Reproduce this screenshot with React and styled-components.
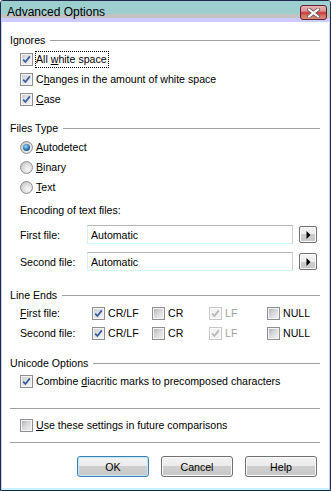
import React from "react";
import styled, { createGlobalStyle } from "styled-components";

const Global = createGlobalStyle`
  html, body { margin: 0; padding: 0; background: #fff; }
  body {
    font-family: "Liberation Sans", Arial, sans-serif;
    font-size: 10.6px;
    color: #000;
  }
`;

const Window = styled.div`
  width: 331px;
  height: 491px;
  box-sizing: border-box;
  border: 1px solid #1d2b4a;
  border-radius: 3px 3px 0 0;
  background: #fff;
  display: flex;
  flex-direction: column;
  overflow: hidden;
  box-shadow: inset 1px 0 #ccccf8, inset -1px 0 #ccccf8, inset 0 -2px #c8f0ff;
`;

const TitleBar = styled.div`
  height: 21px;
  flex: none;
  display: flex;
  justify-content: space-between;
  align-items: flex-start;
  background: linear-gradient(
    to bottom,
    #9dcfcf 0,
    #9dcfcf 13px,
    #c3c3c3 13px,
    #c3c3c3 17px,
    #ccccff 17px,
    #ccccff 21px
  );
`;

const Title = styled.div`
  font-size: 12px;
  line-height: 21px;
  padding: 1px 0 0 6px;
`;

const CloseButton = styled.div`
  width: 27px;
  height: 15px;
  margin: 4px 3px 0 0;
  box-sizing: border-box;
  border: 1px solid #5e2232;
  border-radius: 3px;
  background: linear-gradient(
    to bottom,
    #eab4b4 0%,
    #d99494 40%,
    #c84848 48%,
    #c84848 62%,
    #d4705c 70%,
    #dc8a74 100%
  );
  display: flex;
  align-items: center;
  justify-content: center;
`;

const Body = styled.div`
  flex: 1;
  display: flex;
  flex-direction: column;
  padding: 11px 10px 0 9px;
`;

const Header = styled.div`
  display: flex;
  align-items: center;
  height: 14px;
  margin-top: ${(p) => p.$mt || 0}px;
  &::after {
    content: "";
    flex: 1;
    height: 1px;
    margin: 1px 0 0 5px;
    background: #a0a0a0;
  }
`;

const Row = styled.div`
  display: flex;
  align-items: center;
  gap: 3px;
  height: 20px;
  padding-left: 10px;
  margin-top: ${(p) => p.$mt || 0}px;
`;

const Focus = styled.span`
  outline: 1px dotted #000;
  outline-offset: 0;
  padding: 1px 1px 1px 0;
  line-height: 13px;
`;

const Box = styled.span`
  width: 13px;
  height: 13px;
  flex: none;
  box-sizing: border-box;
  border: 1px solid ${(p) => (p.$disabled ? "#c6c6c6" : "#8e8f8f")};
  box-shadow: inset 0 0 0 1px ${(p) => (p.$disabled ? "#fbfbfb" : "#f4f4f4")};
  background: ${(p) =>
    p.$disabled
      ? "#f2f2f2"
      : p.$checked
      ? "linear-gradient(135deg, #c4c8d0 0%, #e0e2e6 45%, #f6f6f6 100%)"
      : "linear-gradient(135deg, #a9abaf 0%, #d6d7da 45%, #f6f6f6 100%)"};
  display: flex;
  align-items: center;
  justify-content: center;
`;

const RadioDot = styled.span`
  width: 13px;
  height: 13px;
  flex: none;
  box-sizing: border-box;
  border-radius: 50%;
  border: 1px solid #8e8f8f;
  background: radial-gradient(circle at 65% 65%, #f8f8f8 0%, #dadada 55%, #b4b4b4 100%);
  display: flex;
  align-items: center;
  justify-content: center;
  &::after {
    content: "";
    display: ${(p) => (p.$on ? "block" : "none")};
    width: 7px;
    height: 7px;
    border-radius: 50%;
    background: radial-gradient(circle at 40% 35%, #9adcf6 0%, #2a6cae 55%, #0f3c70 100%);
  }
`;

const Label = styled.span`
  color: ${(p) => (p.$disabled ? "#a0a0a0" : "#000")};
  white-space: nowrap;
`;

const FieldRow = styled.div`
  display: flex;
  align-items: center;
  height: 19px;
  padding-left: 10px;
  margin-top: ${(p) => p.$mt || 0}px;
`;

const FieldLabel = styled.span`
  width: 67px;
  flex: none;
`;

const TextBox = styled.div`
  width: 206px;
  height: 19px;
  box-sizing: border-box;
  border: 1px solid;
  border-color: #b4b4b4 #cfcfcf #cff6ff #d4f0fb;
  padding-left: 3px;
  display: flex;
  align-items: center;
`;

const ArrowButton = styled.div`
  width: 18px;
  height: 17px;
  margin-left: 6px;
  box-sizing: border-box;
  border: 1px solid #707070;
  border-radius: 2px;
  box-shadow: inset 0 0 0 1px #fcfcfc;
  background: linear-gradient(to bottom, #f4f4f4 0%, #ececec 50%, #cdcdcd 50%, #c8c8c8 100%);
  display: flex;
  align-items: center;
  justify-content: center;
`;

const LineGrid = styled.div`
  display: grid;
  grid-template-columns: 72px 60px 57px 58px 1fr;
  grid-auto-rows: 20px;
  align-items: center;
  padding-left: 10px;
  margin-top: 1px;
`;

const Cell = styled.div`
  display: flex;
  align-items: center;
  gap: 3px;
`;

const Separator = styled.div`
  height: 1px;
  background: #a0a0a0;
  margin-top: ${(p) => p.$mt || 0}px;
`;

const ButtonRow = styled.div`
  display: flex;
  justify-content: flex-end;
  gap: 12px;
  padding-right: 3px;
  margin-top: 13px;
`;

const Button = styled.div`
  width: 72px;
  height: 21px;
  box-sizing: border-box;
  border: 1px solid ${(p) => (p.$primary ? "#3c7fb1" : "#707070")};
  border-radius: 3px;
  box-shadow: inset 0 0 0 1px ${(p) => (p.$primary ? "#bfeaff" : "#fbfbfb")};
  background: linear-gradient(to bottom, #f2f2f2 0%, #ebebeb 50%, #cfcfcf 50%, #c8c8c8 100%);
  display: flex;
  align-items: center;
  justify-content: center;
`;

const Tick = ({ disabled }) => (
  <svg width="9" height="9" viewBox="0 0 9 9">
    <path
      d="M1.2 4.6 L3.4 7 L7.8 1.4"
      fill="none"
      stroke={disabled ? "#b6b6b6" : "#3b5a9c"}
      strokeWidth="1.7"
    />
  </svg>
);

const Check = ({ checked, disabled }) => (
  <Box $disabled={disabled} $checked={checked}>
    {checked && <Tick disabled={disabled} />}
  </Box>
);

const CloseX = () => (
  <svg width="13" height="10" viewBox="0 0 13 10">
    <path d="M2 1.5 L11 8.5 M11 1.5 L2 8.5" stroke="#6a5a5a" strokeWidth="3.6" strokeLinecap="square" />
    <path d="M2 1.5 L11 8.5 M11 1.5 L2 8.5" stroke="#fff" strokeWidth="2" strokeLinecap="square" />
  </svg>
);

const Arrow = () => (
  <svg width="5" height="8" viewBox="0 0 5 8">
    <polygon points="0.5,0 4.5,4 0.5,8" fill="#000" />
  </svg>
);

const lineEnds = [
  { label: <><u>F</u>irst file:</> },
  { label: "Second file:" },
];

export default function App() {
  return (
    <>
      <Global />
      <Window>
        <TitleBar>
          <Title>Advanced Options</Title>
          <CloseButton>
            <CloseX />
          </CloseButton>
        </TitleBar>
        <Body>
          <Header>Ignores</Header>
          <Row $mt={2}>
            <Check checked />
            <Focus>
              All <u>w</u>hite space
            </Focus>
          </Row>
          <Row>
            <Check checked />
            <Label>
              C<u>h</u>anges in the amount of white space
            </Label>
          </Row>
          <Row>
            <Check checked />
            <Label>
              <u>C</u>ase
            </Label>
          </Row>

          <Header $mt={12}>Files Type</Header>
          <Row $mt={2}>
            <RadioDot $on />
            <Label>
              <u>A</u>utodetect
            </Label>
          </Row>
          <Row>
            <RadioDot />
            <Label>
              <u>B</u>inary
            </Label>
          </Row>
          <Row>
            <RadioDot />
            <Label>
              <u>T</u>ext
            </Label>
          </Row>
          <Row $mt={3}>
            <Label>Encoding of text files:</Label>
          </Row>
          <FieldRow $mt={5}>
            <FieldLabel>First file:</FieldLabel>
            <TextBox>Automatic</TextBox>
            <ArrowButton>
              <Arrow />
            </ArrowButton>
          </FieldRow>
          <FieldRow $mt={8}>
            <FieldLabel>Second file:</FieldLabel>
            <TextBox>Automatic</TextBox>
            <ArrowButton>
              <Arrow />
            </ArrowButton>
          </FieldRow>

          <Header $mt={17}>Line Ends</Header>
          <LineGrid>
            {lineEnds.map((r, i) => (
              <React.Fragment key={i}>
                <Label>{r.label}</Label>
                <Cell>
                  <Check checked />
                  <Label>CR/LF</Label>
                </Cell>
                <Cell>
                  <Check />
                  <Label>CR</Label>
                </Cell>
                <Cell>
                  <Check checked disabled />
                  <Label $disabled>LF</Label>
                </Cell>
                <Cell>
                  <Check />
                  <Label>NULL</Label>
                </Cell>
              </React.Fragment>
            ))}
          </LineGrid>

          <Header $mt={13}>Unicode Options</Header>
          <Row $mt={1}>
            <Check checked />
            <Label>
              Combine <u>d</u>iacritic marks to precomposed characters
            </Label>
          </Row>

          <Separator $mt={17} />
          <Row $mt={6}>
            <Check />
            <Label>
              <u>U</u>se these settings in future comparisons
            </Label>
          </Row>
          <Separator $mt={7} />

          <ButtonRow>
            <Button $primary>OK</Button>
            <Button>Cancel</Button>
            <Button>Help</Button>
          </ButtonRow>
        </Body>
      </Window>
    </>
  );
}
